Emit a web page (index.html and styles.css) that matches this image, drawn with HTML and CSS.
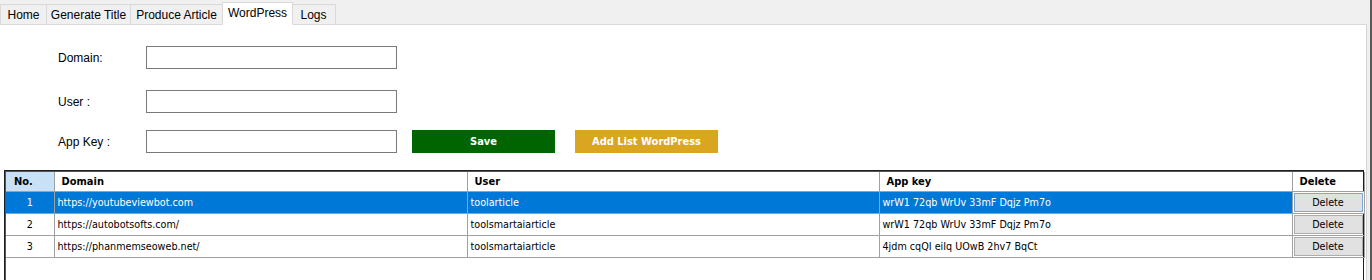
FILE: index.html
```html
<!DOCTYPE html>
<html>
<head>
<meta charset="utf-8">
<link rel="stylesheet" href="styles.css">
</head>
<body>
<div class="window">
  <div class="tabs">
    <div class="tab t-home">Home</div>
    <div class="tab t-gen">Generate Title</div>
    <div class="tab t-prod">Produce Article</div>
    <div class="tab t-wp active">WordPress</div>
    <div class="tab t-logs">Logs</div>
  </div>
  <div class="page">
    <div class="form">
      <div class="row r1">
        <label class="lbl">Domain:</label>
        <div class="input"></div>
      </div>
      <div class="row r2">
        <label class="lbl">User :</label>
        <div class="input"></div>
      </div>
      <div class="row r3">
        <label class="lbl">App Key :</label>
        <div class="input"></div>
        <button class="btn save">Save</button>
        <button class="btn add">Add List WordPress</button>
      </div>
    </div>
    <div class="grid">
      <table>
        <colgroup>
          <col class="c-no"><col class="c-dom"><col class="c-user"><col class="c-key"><col class="c-del">
        </colgroup>
        <thead>
          <tr>
            <th class="h-no">No.</th>
            <th>Domain</th>
            <th>User</th>
            <th>App key</th>
            <th>Delete</th>
          </tr>
        </thead>
        <tbody>
          <tr class="sel">
            <td class="num">1</td>
            <td>https://youtubeviewbot.com</td>
            <td>toolarticle</td>
            <td>wrW1 72qb WrUv 33mF Dqjz Pm7o</td>
            <td class="del"><div class="dbtn focus">Delete</div></td>
          </tr>
          <tr>
            <td class="num">2</td>
            <td>https://autobotsofts.com/</td>
            <td>toolsmartaiarticle</td>
            <td>wrW1 72qb WrUv 33mF Dqjz Pm7o</td>
            <td class="del"><div class="dbtn">Delete</div></td>
          </tr>
          <tr>
            <td class="num">3</td>
            <td>https://phanmemseoweb.net/</td>
            <td>toolsmartaiarticle</td>
            <td>4jdm cqQI eiIq UOwB 2hv7 BqCt</td>
            <td class="del"><div class="dbtn">Delete</div></td>
          </tr>
        </tbody>
      </table>
    </div>
  </div>
</div>
</body>
</html>
```

FILE: styles.css
```css
html, body {
  margin: 0;
  padding: 0;
  background: #f0f0f0;
  height: 280px;
  overflow: hidden;
}
.window {
  width: 1367px;
  height: 280px;
  border-right: 3px solid #f0f0f0;
  box-shadow: 2px 0 0 #5a5a5a;
  display: flex;
  flex-direction: column;
  font-family: "DejaVu Sans Condensed", "Liberation Sans", sans-serif;
  font-size: 10.7px;
  color: #000;
}
.tabs {
  height: 25px;
  display: flex;
  align-items: flex-end;
  background: #f0f0f0;
  border-bottom: 1px solid #d9d9d9;
  box-sizing: border-box;
  font-family: "Liberation Sans", sans-serif;
  font-size: 12px;
}
.tab {
  height: 21px;
  line-height: 20px;
  box-sizing: border-box;
  text-align: center;
  border: 1px solid #d9d9d9;
  border-left: none;
  background: #f0f0f0;
  margin-bottom: -1px;
}
.t-home { width: 47px; border-left: 1px solid #d9d9d9; }
.t-gen { width: 84px; }
.t-prod { width: 92px; }
.t-logs { width: 44px; }
.tab.active {
  width: 71px;
  height: 23px;
  line-height: 20px;
  background: #fff;
  border-bottom-color: #fff;
  border-left: 1px solid #d9d9d9;
  margin-left: -1px;
  margin-right: -1px;
  position: relative;
}
.page {
  flex: 1;
  background: #fff;
  border-right: 1px solid #d4d4d4;
  display: flex;
  flex-direction: column;
}
.form {
  padding-left: 58px;
  padding-top: 21px;
}
.row {
  display: flex;
  align-items: center;
  height: 23px;
}
.r2 { margin-top: 21px; }
.r3 { margin-top: 17px; }
.lbl {
  width: 88px;
  font-family: "Liberation Sans", sans-serif;
  font-size: 12px;
}
.input {
  width: 251px;
  height: 23px;
  box-sizing: border-box;
  border: 1px solid #7a7a7a;
  background: #fff;
}
.btn {
  height: 23px;
  width: 143px;
  border: none;
  padding: 0;
  font-family: "DejaVu Sans Condensed", "Liberation Sans", sans-serif;
  font-size: 11px;
  font-weight: bold;
  color: #fff;
}
.save { background: #006400; margin-left: 15px; }
.add { background: #daa520; margin-left: 20px; }
.grid {
  margin: 17px 0 0 4px;
  width: 1360px;
  flex: 1;
  border: 1px solid #1e1e1e;
  border-bottom: none;
  box-shadow: inset 1px 1px 0 #555;
  padding: 1px 0 0 1px;
  box-sizing: border-box;
}
table {
  border-collapse: collapse;
  table-layout: fixed;
  width: 1358px;
}
.c-no { width: 48px; }
.c-dom { width: 413px; }
.c-user { width: 412px; }
.c-key { width: 413px; }
.c-del { width: 72px; }
th, td {
  border: 1px solid #a0a0a0;
  padding: 0 3px;
  white-space: nowrap;
  overflow: hidden;
  text-align: left;
  height: 22px;
  box-sizing: border-box;
}
th {
  font-weight: bold;
  font-size: 11px;
  height: 19px;
  padding-left: 7px;
  border-top: none;
}
th:first-child, td:first-child { border-left: none; }
th.h-no { background: #c9e1f6; padding-left: 8px; }
td.num { text-align: center; }
tr.sel td { background: #0078d7; color: #fff; }
tr.sel td.del { background: #fff; }
td.del { padding: 1px 1px; }
.dbtn {
  height: 19px;
  line-height: 17px;
  box-sizing: border-box;
  border: 1px solid #adadad;
  background: #e1e1e1;
  text-align: center;
  color: #000;
}
.dbtn.focus { border: 1px solid #7aa7d6; }
```
